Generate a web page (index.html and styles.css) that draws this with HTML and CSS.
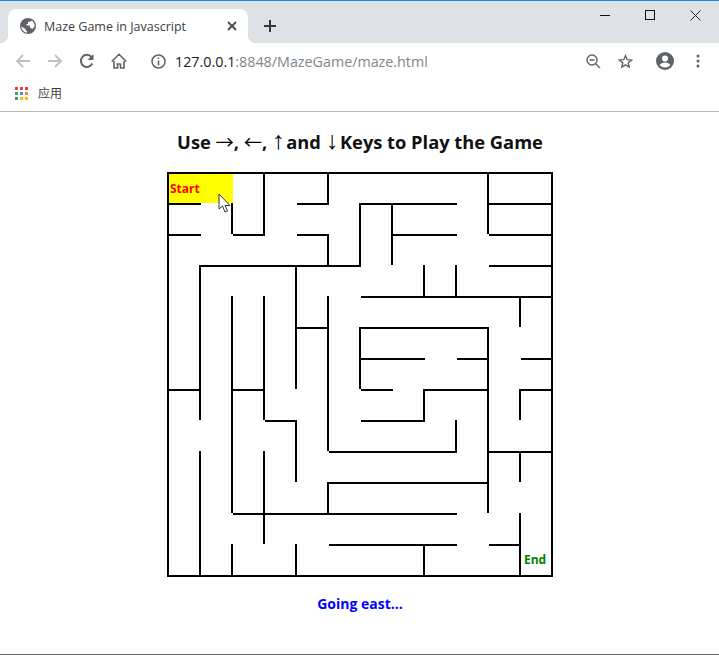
FILE: index.html
```html
<!DOCTYPE html>
<html lang="zh-CN">
<head>
  <meta charset="UTF-8">
  <title>Maze Game in Javascript</title>
  <link rel="stylesheet" href="styles.css">
</head>
<body>
  <div class="browser">
    <div class="tabstrip">
      <div class="tab">
        <svg class="tab-icon" width="16" height="16" viewBox="0 0 16 16">
          <circle cx="8" cy="8" r="8" fill="#5f6368"/>
          <path d="M7 14.800C4 14.300 1.600 11.500 1.300 8.500L5.500 11v1.200l1.500 1zM11.800 2.600c1.500 1.100 2.700 3 2.900 5.200-.4 1.300-1.300 2.500-2.500 3.200-.3-.7-.9-1.100-1.700-1.100h-.5V7.500H6.500V6h1.500V3.800h2.400z" fill="#fff"/>
        </svg>
        <span class="tab-title">Maze Game in Javascript</span>
        <svg class="tab-close" width="10" height="10" viewBox="0 0 10 10">
          <path d="M1 1l8 8M9 1l-8 8" stroke="#45494d" stroke-width="1.800" fill="none"/>
        </svg>
      </div>
      <svg class="new-tab" width="12" height="12" viewBox="0 0 12 12">
        <path d="M6 0v12M0 6h12" stroke="#34373b" stroke-width="2" fill="none"/>
      </svg>
      <div class="window-btns">
        <svg width="11" height="11" viewBox="0 0 11 11"><path d="M0 5.500h10" stroke="#111" fill="none"/></svg>
        <svg width="11" height="11" viewBox="0 0 11 11"><rect x=".5" y=".5" width="9" height="9" stroke="#111" fill="none"/></svg>
        <svg width="11" height="11" viewBox="0 0 11 11"><path d="M.5 .5l10 10M10.500 .5l-10 10" stroke="#222" fill="none"/></svg>
      </div>
    </div>

    <div class="toolbar">
      <svg class="nav-icon" width="16" height="14" viewBox="0 0 16 14">
        <path d="M15 7H2M8 1L2 7l6 6" stroke="#bdc0c4" stroke-width="1.800" fill="none"/>
      </svg>
      <svg class="nav-icon" width="16" height="14" viewBox="0 0 16 14">
        <path d="M1 7h13M8 1l6 6-6 6" stroke="#bdc0c4" stroke-width="1.800" fill="none"/>
      </svg>
      <svg class="nav-icon" width="16" height="16" viewBox="0 0 16 16">
        <path d="M13.300 10.500A6 6 0 1 1 12.500 4" stroke="#5f6368" stroke-width="2" fill="none"/>
        <path d="M14.500 1v6h-6z" fill="#5f6368"/>
      </svg>
      <svg class="nav-icon" width="16" height="16" viewBox="0 0 16 16">
        <path d="M3 8v7h3.500v-4h3v4H13V8M.7 8.500L8 1.300l7.300 7.200" stroke="#5f6368" stroke-width="1.600" fill="none"/>
      </svg>
      <svg class="info-icon" width="15" height="15" viewBox="0 0 15 15">
        <circle cx="7.500" cy="7.500" r="6.500" stroke="#5f6368" stroke-width="1.500" fill="none"/>
        <path d="M6.700 3.500h1.600v1.600H6.700zM6.700 6.500h1.600v5H6.700z" fill="#5f6368"/>
      </svg>
      <span class="url"><span class="url-host">127.0.0.1</span>:8848/MazeGame/maze.html</span>
      <svg class="tool-icon zoom-out" width="15" height="15" viewBox="0 0 15 15">
        <circle cx="6" cy="6" r="5" stroke="#5f6368" stroke-width="1.400" fill="none"/>
        <path d="M3.500 6h5M9.500 9.500l4.500 4.500" stroke="#5f6368" stroke-width="1.400" fill="none"/>
      </svg>
      <svg class="tool-icon star" width="15" height="15" viewBox="0 0 15 15">
        <path d="M7.500 1.800l1.700 3.900 4.200.4-3.200 2.800 1 4.100-3.700-2.200-3.700 2.200 1-4.100L1.600 6.100l4.200-.4z" stroke="#5f6368" stroke-width="1.400" fill="none"/>
      </svg>
      <svg class="tool-icon avatar" width="18" height="18" viewBox="0 0 18 18">
        <circle cx="9" cy="9" r="9" fill="#5f6368"/>
        <circle cx="9" cy="6.500" r="3" fill="#fff"/>
        <path d="M3.500 13c1-1.800 3.300-2.600 5.500-2.600s4.500.8 5.500 2.600c-1.200 1.500-3.300 2.500-5.500 2.500s-4.300-1-5.500-2.500z" fill="#fff"/>
      </svg>
      <svg class="tool-icon menu" width="4" height="14" viewBox="0 0 4 14">
        <circle cx="2" cy="2" r="1.500" fill="#5f6368"/>
        <circle cx="2" cy="7" r="1.500" fill="#5f6368"/>
        <circle cx="2" cy="12" r="1.500" fill="#5f6368"/>
      </svg>
    </div>

    <div class="bookmarks">
      <svg width="13" height="13" viewBox="0 0 13 13">
        <path d="M0 0h3v3H0z" fill="#ea4335"/><path d="M5 0h3v3H5z" fill="#ea4335"/><path d="M10 0h3v3h-3z" fill="#ea4335"/>
        <path d="M0 5h3v3H0z" fill="#34a853"/><path d="M5 5h3v3H5z" fill="#4285f4"/><path d="M10 5h3v3h-3z" fill="#ea8a35"/>
        <path d="M0 10h3v3H0z" fill="#34a853"/><path d="M5 10h3v3H5z" fill="#fbbc05"/><path d="M10 10h3v3h-3z" fill="#fbbc05"/>
      </svg>
      <span class="bookmark-label">应用</span>
    </div>
  </div>

  <div class="page">
    <h1 class="heading">Use <span class="arrow">→</span>, <span class="arrow">←</span>, <span class="arrow-v">↑</span> and <span class="arrow-v">↓</span> Keys to Play the Game</h1>

    <div class="maze">
      <div class="start">Start</div>
      <div class="end">End</div>
      <svg class="walls" width="386" height="405" viewBox="0 0 386 405">
        <rect x="1" y="1" width="384" height="403"/>
        <!-- horizontal walls -->
        <path transform="translate(1 0)" d="M0 32H33M129 32H161M193 32H289M321 32H384
                 M0 63H33M65 63H97M129 63H161M225 63H289M321 63H384
                 M33 94H193M321 94H384
                 M193 125H384
                 M129 156H161M193 156H321
                 M193 187H257M289 187H321M353 187H384
                 M0 218H33M65 218H97M193 218H225M257 218H321M353 218H384
                 M97 249H129M193 249H257
                 M161 280H289M321 280H384
                 M161 311H321
                 M65 342H289
                 M161 373H289M321 373H353"/>
        <!-- vertical walls -->
        <path transform="translate(0 -1)" d="M33 94V249M33 280V405
                 M65 32V63M65 125V342M65 373V405
                 M97 2V63M97 125V249M97 280V373
                 M129 94V218M129 249V311M129 373V405
                 M161 2V32M161 63V94M161 125V280M161 311V342
                 M193 32V94M193 156V218
                 M225 32V94
                 M257 94V125M257 218V249M257 373V405
                 M289 94V125M289 249V280
                 M321 2V63M321 156V342
                 M353 125V156M353 218V249M353 280V311M353 342V405"/>
      </svg>
      <svg class="cursor" width="14" height="20" viewBox="0 0 14 20">
        <path d="M1 1v15l3.500-3 2.500 6 2.500-1-2.500-5.500H12z" fill="#fff" stroke="#333" stroke-width="1"/>
      </svg>
    </div>

    <p class="status">Going east...</p>
  </div>
</body>
</html>
```

FILE: styles.css
```css
* {
  box-sizing: border-box;
}
html, body {
  margin: 0;
  height: 100%;
}
body {
  display: flex;
  flex-direction: column;
  background: #fff;
  font-family: "Open Sans", "Noto Sans CJK SC", sans-serif;
  overflow: hidden;
}

/* browser chrome */
.browser {
  flex: none;
  height: 112px;
  border-bottom: 1px solid #b9b9b9;
}
.tabstrip {
  display: flex;
  align-items: flex-end;
  height: 43px;
  padding-left: 8px;
  background: #dee1e6;
  border-top: 1px solid #1a8ad8;
}
.tab {
  position: relative;
  display: flex;
  align-items: center;
  width: 240px;
  height: 34px;
  padding: 0 11px 0 12px;
  background: #fff;
  border-radius: 8px 8px 0 0;
}
.tab::before,
.tab::after {
  content: "";
  position: absolute;
  bottom: 0;
  width: 8px;
  height: 8px;
}
.tab::before {
  left: -8px;
  background: radial-gradient(circle at 0 0, #dee1e6 8px, #fff 8.5px);
}
.tab::after {
  right: -8px;
  background: radial-gradient(circle at 100% 0, #dee1e6 8px, #fff 8.5px);
}
.tab-icon {
  flex: none;
}
.tab-title {
  flex: 1;
  margin-left: 8px;
  font-size: 12.5px;
  color: #3c4043;
  white-space: nowrap;
}
.new-tab {
  margin: 0 0 11px 16px;
}
.window-btns {
  display: flex;
  gap: 34px;
  margin: 0 18px 22px auto;
}

.toolbar {
  display: flex;
  align-items: center;
  height: 36px;
  padding-left: 15px;
}
.nav-icon {
  flex: none;
  margin-right: 16px;
}
.info-icon {
  flex: none;
  margin: 0 9px 0 8px;
}
.url {
  font-size: 14.3px;
  color: #80868b;
  white-space: nowrap;
}
.url-host {
  color: #202124;
}
.tool-icon {
  flex: none;
}
.zoom-out {
  margin-left: 158px;
}
.star {
  margin-left: 17px;
}
.avatar {
  margin-left: 23px;
}
.menu {
  margin-left: 22px;
}

.bookmarks {
  display: flex;
  align-items: center;
  height: 28px;
  padding-left: 15px;
}
.bookmark-label {
  margin-left: 10px;
  font-size: 12px;
  color: #3c4043;
}

/* game */
.page {
  flex: 1;
  padding-left: 1px;
  border-bottom: 1px solid #666;
}
.heading {
  margin: 17px 0 17px;
  font-size: 18.3px;
  line-height: 26px;
  font-weight: 700;
  text-align: center;
  color: #111;
}
.arrow {
  font-family: "Noto Sans CJK SC", sans-serif;
  font-weight: 400;
  line-height: 0;
  color: #000;
}
.arrow-v {
  font-family: "Liberation Sans", sans-serif;
  font-size: 25px;
  font-weight: 400;
  line-height: 0;
  letter-spacing: -3px;
  color: #000;
}
.maze {
  position: relative;
  width: 386px;
  height: 405px;
  margin: 0 auto;
}
.walls {
  display: block;
}
.walls rect,
.walls path {
  fill: none;
  stroke: #000;
  stroke-width: 2;
}
.start,
.end {
  position: absolute;
  font-size: 12px;
  font-weight: 700;
  line-height: 16px;
}
.start {
  top: 2px;
  left: 2px;
  width: 64px;
  height: 29px;
  padding: 7px 0 0 1px;
  background: #ff0;
  color: #f00;
}
.end {
  top: 380px;
  left: 357px;
  color: #008000;
}
.cursor {
  position: absolute;
  top: 21px;
  left: 51px;
}
.status {
  margin: 18px 0 0;
  font-size: 14px;
  line-height: 18px;
  font-weight: 700;
  text-align: center;
  color: #00f;
}
```
